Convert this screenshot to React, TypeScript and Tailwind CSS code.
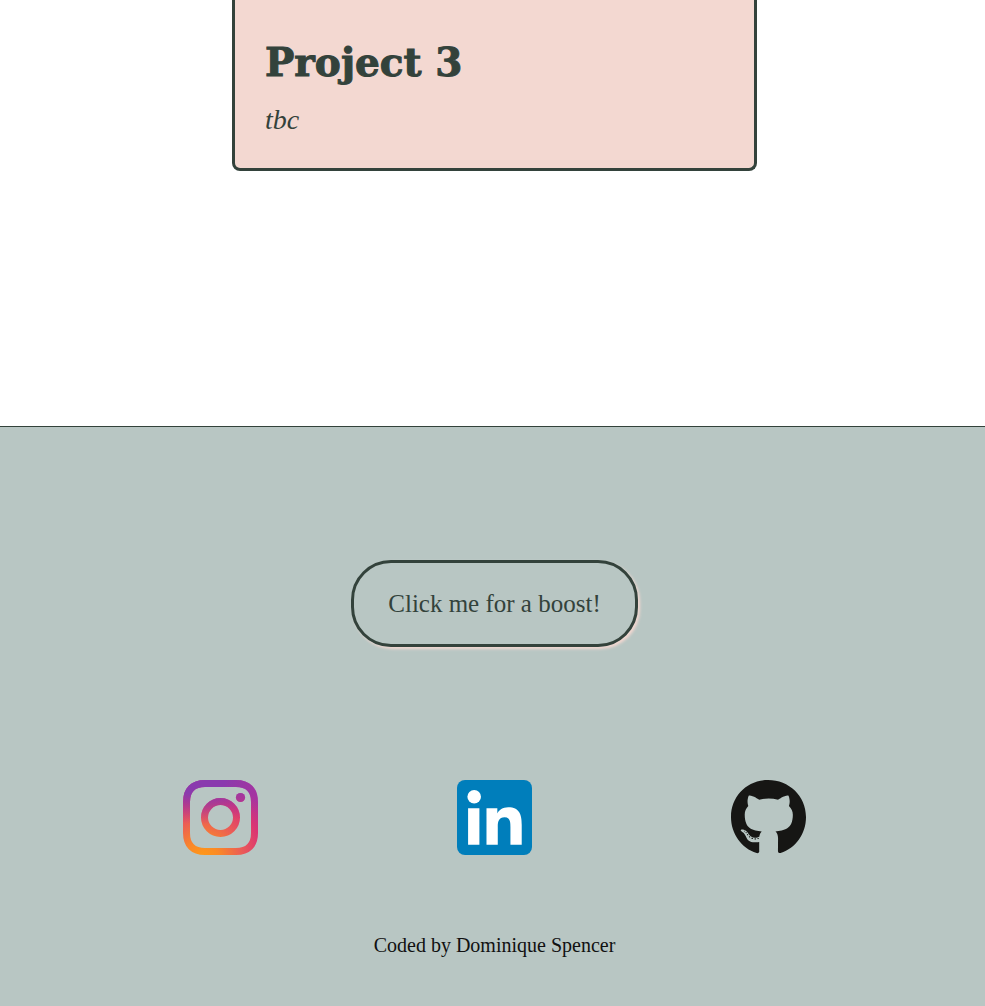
import { FaGithub } from "react-icons/fa";

function InstagramIcon() {
  return (
    <svg viewBox="0 0 75 75" className="size-[75px]" aria-hidden="true">
      <defs>
        <radialGradient id="warm" gradientUnits="userSpaceOnUse" cx="20" cy="78" r="80">
          <stop offset="0" stopColor="#ff9a16" />
          <stop offset="0.2" stopColor="#fb8a26" />
          <stop offset="0.5" stopColor="#ea5a58" />
          <stop offset="0.75" stopColor="#db3473" />
          <stop offset="1" stopColor="#a833a0" />
        </radialGradient>
        <radialGradient
          id="cool"
          gradientUnits="userSpaceOnUse"
          cx="0"
          cy="0"
          r="1"
          gradientTransform="translate(14 -2) rotate(4) scale(80 46)"
        >
          <stop offset="0" stopColor="#8a3aae" />
          <stop offset="0.35" stopColor="#8a3aae" />
          <stop offset="0.6" stopColor="#8f39a8" stopOpacity="0.6" />
          <stop offset="1" stopColor="#a833a0" stopOpacity="0" />
        </radialGradient>
      </defs>
      {["url(#warm)", "url(#cool)"].map((paint) => (
        <g key={paint}>
          <path
            fill="none"
            stroke={paint}
            strokeWidth="7"
            d="M22 3.5H53C65 3.5 71.500 10 71.500 22V53C71.500 65 65 71.500 53 71.500H22C10 71.500 3.500 65 3.500 53V22C3.500 10 10 3.500 22 3.500Z"
          />
          <circle cx="37.500" cy="37.500" r="16" fill="none" stroke={paint} strokeWidth="7" />
          <circle cx="57.500" cy="17.500" r="4.600" fill={paint} />
        </g>
      ))}
    </svg>
  );
}

function LinkedInIcon() {
  return (
    <svg viewBox="0 0 75 75" className="size-[75px]" aria-hidden="true">
      <rect width="75" height="75" rx="8" fill="#007ebb" />
      <circle cx="17.200" cy="16.800" r="6.800" fill="#fff" />
      <path
        fill="#fff"
        transform="translate(-0.200 -0.300) scale(3.175)"
        d="M20.447 20.452h-3.554v-5.569c0-1.328-.027-3.037-1.852-3.037-1.853 0-2.136 1.445-2.136 2.939v5.667H9.351V9h3.414v1.561h.046c.477-.9 1.637-1.850 3.370-1.850 3.601 0 4.267 2.370 4.267 5.455v6.286zM7.119 20.452H3.555V9h3.564v11.452z"
      />
    </svg>
  );
}

export default function App() {
  return (
    <div className="bg-white font-['Liberation_Serif',serif] text-[#33423b]">
      <main className="flex justify-center pb-[255px] pl-1">
        <article className="w-full max-w-[525px] rounded-b-lg border-3 border-t-0 border-[#33423b] bg-[#f3d8d1] px-[30px] pt-9 pb-8">
          <h2 className="font-['DejaVu_Serif',serif] text-[39px] leading-[52px] font-bold [-webkit-text-stroke:1px_#33423b]">
            Project 3
          </h2>
          <p className="mt-4 text-[28px] leading-8 italic">tbc</p>
        </article>
      </main>
      <footer className="flex flex-col items-center border-t border-[#33423b] bg-[#b8c6c3] pt-[133px] pb-12 pl-1">
        <button
          type="button"
          className="h-[87px] rounded-[40px] border-3 border-[#33423b] px-[34px] text-[25px] leading-8 shadow-[2px_2px_3px_#f3d8d1]"
        >
          Click me for a boost!
        </button>
        <nav aria-label="Social links" className="mt-[133px] grid w-full max-w-[822px] grid-cols-3 justify-items-center">
          <a href="#instagram" aria-label="Instagram">
            <InstagramIcon />
          </a>
          <a href="#linkedin" aria-label="LinkedIn">
            <LinkedInIcon />
          </a>
          <a href="#github" aria-label="GitHub">
            <FaGithub viewBox="0 8 496 496" className="size-[75px] text-[#161614]" aria-hidden="true" />
          </a>
        </nav>
        <p className="mt-[76px] text-[20px] leading-7 text-[#111]">Coded by Dominique Spencer</p>
      </footer>
    </div>
  );
}
